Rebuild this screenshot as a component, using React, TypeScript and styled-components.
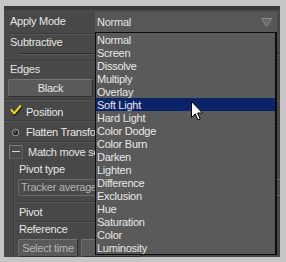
import React from 'react'
import styled, { createGlobalStyle } from 'styled-components'

const GlobalStyle = createGlobalStyle`
  html, body {
    margin: 0;
    padding: 0;
    background: #c6c6c6;
  }
  body {
    font-family: "Liberation Sans", Arial, sans-serif;
    font-size: 11px;
    letter-spacing: -0.25px;
    color: #e6e6e6;
  }
`

const modes = [
  'Normal', 'Screen', 'Dissolve', 'Multiply', 'Overlay', 'Soft Light', 'Hard Light',
  'Color Dodge', 'Color Burn', 'Darken', 'Lighten', 'Difference', 'Exclusion', 'Hue',
  'Saturation', 'Color', 'Luminosity',
]

export default function App() {
  return (
    <>
      <GlobalStyle />
      <Panel>
        <ApplyRow>
          <Label>Apply Mode</Label>
          <Combo>
            <span>Normal</span>
            <Arrow width="11" height="9" viewBox="0 0 11 9">
              <path d="M0.5 0.5 L10.5 0.5 L5.5 8.5 Z" fill="#6c6c6c" stroke="#8a8a8a" />
              <path d="M2.5 1.8 L8.5 1.8" stroke="#5a5a5a" />
            </Arrow>
          </Combo>
        </ApplyRow>
        <Divider />
        <SliderRow>
          <Label>Subtractive</Label>
          <SliderTrack />
        </SliderRow>
        <Divider />
        <EdgesRow>
          <Label>Edges</Label>
          <Button $width={85}>Black</Button>
        </EdgesRow>
        <Divider />
        <CheckRow $pad={5}>
          <Tick width="12" height="11" viewBox="0 0 12 11">
            <path d="M2.2 5.8 L4.8 9.2 L10.8 2" fill="none" stroke="#1e1e1e" strokeWidth="3.4" strokeLinecap="round" strokeLinejoin="round" />
            <path d="M1.5 5 L4.2 8.4 L10.2 1.2" fill="none" stroke="#f5d41c" strokeWidth="2.2" strokeLinecap="round" strokeLinejoin="round" />
          </Tick>
          <Label>Position</Label>
        </CheckRow>
        <Divider />
        <CheckRow $pad={4}>
          <Radio width="12" height="11" viewBox="0 0 12 11">
            <circle cx="5" cy="5.5" r="3.4" fill="#262626" stroke="#8c8c8c" strokeWidth="1.2" />
            <circle cx="4.4" cy="4.9" r="1.2" fill="#5a5a5a" />
          </Radio>
          <Label>Flatten Transform</Label>
        </CheckRow>
        <Divider />
        <GroupHeader>
          <Collapse />
          <Label>Match move settings</Label>
        </GroupHeader>
        <Group>
          <Label>Pivot type</Label>
          <Field>Tracker average</Field>
          <Divider $gap={5} />
          <PlainRow>
            <Label>Pivot</Label>
          </PlainRow>
          <Divider />
          <Label>Reference</Label>
          <ButtonRow>
            <Button $width={60} $dim>Select time</Button>
            <Button $width={60} $dim />
          </ButtonRow>
        </Group>

        <List>
          {modes.map((m) => (
            <Item key={m} $active={m === 'Soft Light'}>{m}</Item>
          ))}
        </List>
        <Cursor width="12" height="20" viewBox="0 0 12 20">
          <path d="M0.5 0.5 L0.5 16.5 L4.3 12.8 L6.9 19 L9.1 18 L6.6 12 L11.5 12 Z" fill="#fff" stroke="#000" strokeWidth="1" strokeLinejoin="miter" />
        </Cursor>
      </Panel>
    </>
  )
}

const Panel = styled.div`
  position: relative;
  margin: 6px 0 0 4px;
  width: 276px;
  height: 251px;
  background: #484848;
  border-top: 4px solid #3a3a3a;
  box-sizing: border-box;
  overflow: hidden;
  display: flex;
  flex-direction: column;
`
const Label = styled.div`
  line-height: 13px;
  height: 13px;
  white-space: nowrap;
`
const ApplyRow = styled.div`
  height: 23px;
  display: flex;
  align-items: center;
  padding-left: 6px;
  ${Label} {
    width: 85px;
  }
`
const Combo = styled.div`
  flex: 1;
  height: 21px;
  margin: 0 3px 0 0;
  background: #575757;
  border-top: 1px solid #4f4f4f;
  box-sizing: border-box;
  display: flex;
  align-items: center;
  justify-content: space-between;
  padding: 0 5px 0 2px;
`
const Arrow = styled.svg`
  display: block;
`
const Divider = styled.div<{ $gap?: number }>`
  height: 1px;
  margin-top: ${(p) => p.$gap ?? 0}px;
  background: #3a3a3a;
  border-bottom: 1px solid #555;
  flex-shrink: 0;
`
const SliderRow = styled.div`
  height: 25px;
  padding: 1px 0 0 6px;
  box-sizing: border-box;
`
const SliderTrack = styled.div`
  margin: 4px 0 0 10px;
  height: 1px;
  background: #2c2c2c;
  border-bottom: 1px solid #5a5a5a;
`
const EdgesRow = styled.div`
  height: 37px;
  padding: 1px 0 0 6px;
  box-sizing: border-box;
  ${Label} {
    margin-bottom: 3px;
  }
`
const Button = styled.div<{ $width: number; $dim?: boolean }>`
  width: ${(p) => p.$width}px;
  height: 18px;
  margin-left: -2px;
  box-sizing: border-box;
  background: #5a5a5a;
  border: 1px solid #303030;
  border-top-color: #747474;
  border-left-color: #6e6e6e;
  border-radius: 2px;
  color: ${(p) => (p.$dim ? '#b4b4b4' : '#e6e6e6')};
  display: flex;
  align-items: center;
  justify-content: center;
  white-space: nowrap;
`
const CheckRow = styled.div<{ $pad: number }>`
  height: 19px;
  padding: ${(p) => p.$pad}px 0 0 6px;
  box-sizing: border-box;
  display: flex;
  align-items: flex-start;
  gap: 4px;
`
const Tick = styled.svg`
  display: block;
  margin-top: -1px;
`
const Radio = styled.svg`
  display: block;
  margin: 1px 0 0 1px;
  width: 11px;
`
const GroupHeader = styled.div`
  height: 19px;
  padding: 2px 0 0 5px;
  box-sizing: border-box;
  display: flex;
  align-items: flex-start;
  gap: 5px;
  ${Label} {
    margin-top: 1px;
  }
`
const Collapse = styled.div`
  position: relative;
  width: 14px;
  height: 14px;
  box-sizing: border-box;
  background: #4c4c4c;
  border: 1px solid #7a7a7a;
  border-right-color: #5e5e5e;
  border-bottom-color: #5e5e5e;
  &::after {
    content: '';
    position: absolute;
    left: 2px;
    right: 2px;
    top: 5px;
    height: 1px;
    background: #d8d8d8;
  }
`
const Group = styled.div`
  flex: 1;
  margin-left: 9px;
  padding: 1px 0 0 5px;
  border-left: 1px solid #3a3a3a;
  box-shadow: inset 1px 0 0 #525252;
`
const Field = styled.div`
  margin: 3px 0 0 -1px;
  height: 17px;
  box-sizing: border-box;
  background: #4b4b4b;
  border: 1px solid #6a6a6a;
  border-right: none;
  border-radius: 2px 0 0 2px;
  color: #b4b4b4;
  padding: 0 0 0 2px;
  line-height: 15px;
`
const PlainRow = styled.div`
  height: 18px;
  padding-top: 3px;
  box-sizing: border-box;
`
const ButtonRow = styled.div`
  margin-top: 3px;
  display: flex;
  gap: 5px;
  padding-left: 1px;
`
const List = styled.div`
  position: absolute;
  left: 91px;
  top: 22px;
  width: 182px;
  box-sizing: border-box;
  background: #5a5a5a;
  border: 1px solid #0c0c0c;
  border-right-width: 2px;
  display: flex;
  flex-direction: column;
`
const Item = styled.div<{ $active?: boolean }>`
  height: 13px;
  line-height: 14px;
  padding-left: 1px;
  white-space: nowrap;
  background: ${(p) => (p.$active ? '#0a246a' : 'transparent')};
  color: #e8e8e8;
`
const Cursor = styled.svg`
  position: absolute;
  left: 187px;
  top: 91px;
`
